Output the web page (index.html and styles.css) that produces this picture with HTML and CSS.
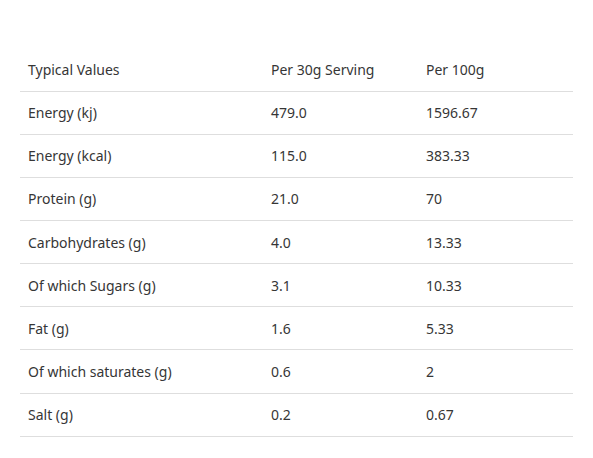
FILE: index.html
```html
<!DOCTYPE html>
<html>
<head>
<meta charset="utf-8">
<link rel="stylesheet" href="styles.css">
</head>
<body>
<div class="wrap">
<table class="nutrition">
  <colgroup><col class="c1"><col class="c2"><col class="c3"></colgroup>
  <thead>
    <tr><th>Typical Values</th><th>Per 30g Serving</th><th>Per 100g</th></tr>
  </thead>
  <tbody>
    <tr><td>Energy (kj)</td><td>479.0</td><td>1596.67</td></tr>
    <tr><td>Energy (kcal)</td><td>115.0</td><td>383.33</td></tr>
    <tr><td>Protein (g)</td><td>21.0</td><td>70</td></tr>
    <tr><td>Carbohydrates (g)</td><td>4.0</td><td>13.33</td></tr>
    <tr><td>Of which Sugars (g)</td><td>3.1</td><td>10.33</td></tr>
    <tr><td>Fat (g)</td><td>1.6</td><td>5.33</td></tr>
    <tr><td>Of which saturates (g)</td><td>0.6</td><td>2</td></tr>
    <tr><td>Salt (g)</td><td>0.2</td><td>0.67</td></tr>
  </tbody>
</table>
</div>
</body>
</html>
```
FILE: styles.css
```css
html, body {
  margin: 0;
  padding: 0;
  background: #fff;
}
.wrap {
  padding: 48.5px 20px 0 20px;
}
.nutrition {
  width: 553px;
  border-collapse: collapse;
  table-layout: fixed;
  font-family: "Noto Sans", "Open Sans", sans-serif;
  font-size: 14px;
  color: #363636;
}
.c1 { width: 243px; }
.c2 { width: 155px; }
.c3 { width: 155px; }
.nutrition th,
.nutrition td {
  text-align: left;
  font-weight: 400;
  height: 42.125px;
  padding: 0 8px;
  border-bottom: 1px solid #dedede;
  vertical-align: middle;
  white-space: nowrap;
}
```
